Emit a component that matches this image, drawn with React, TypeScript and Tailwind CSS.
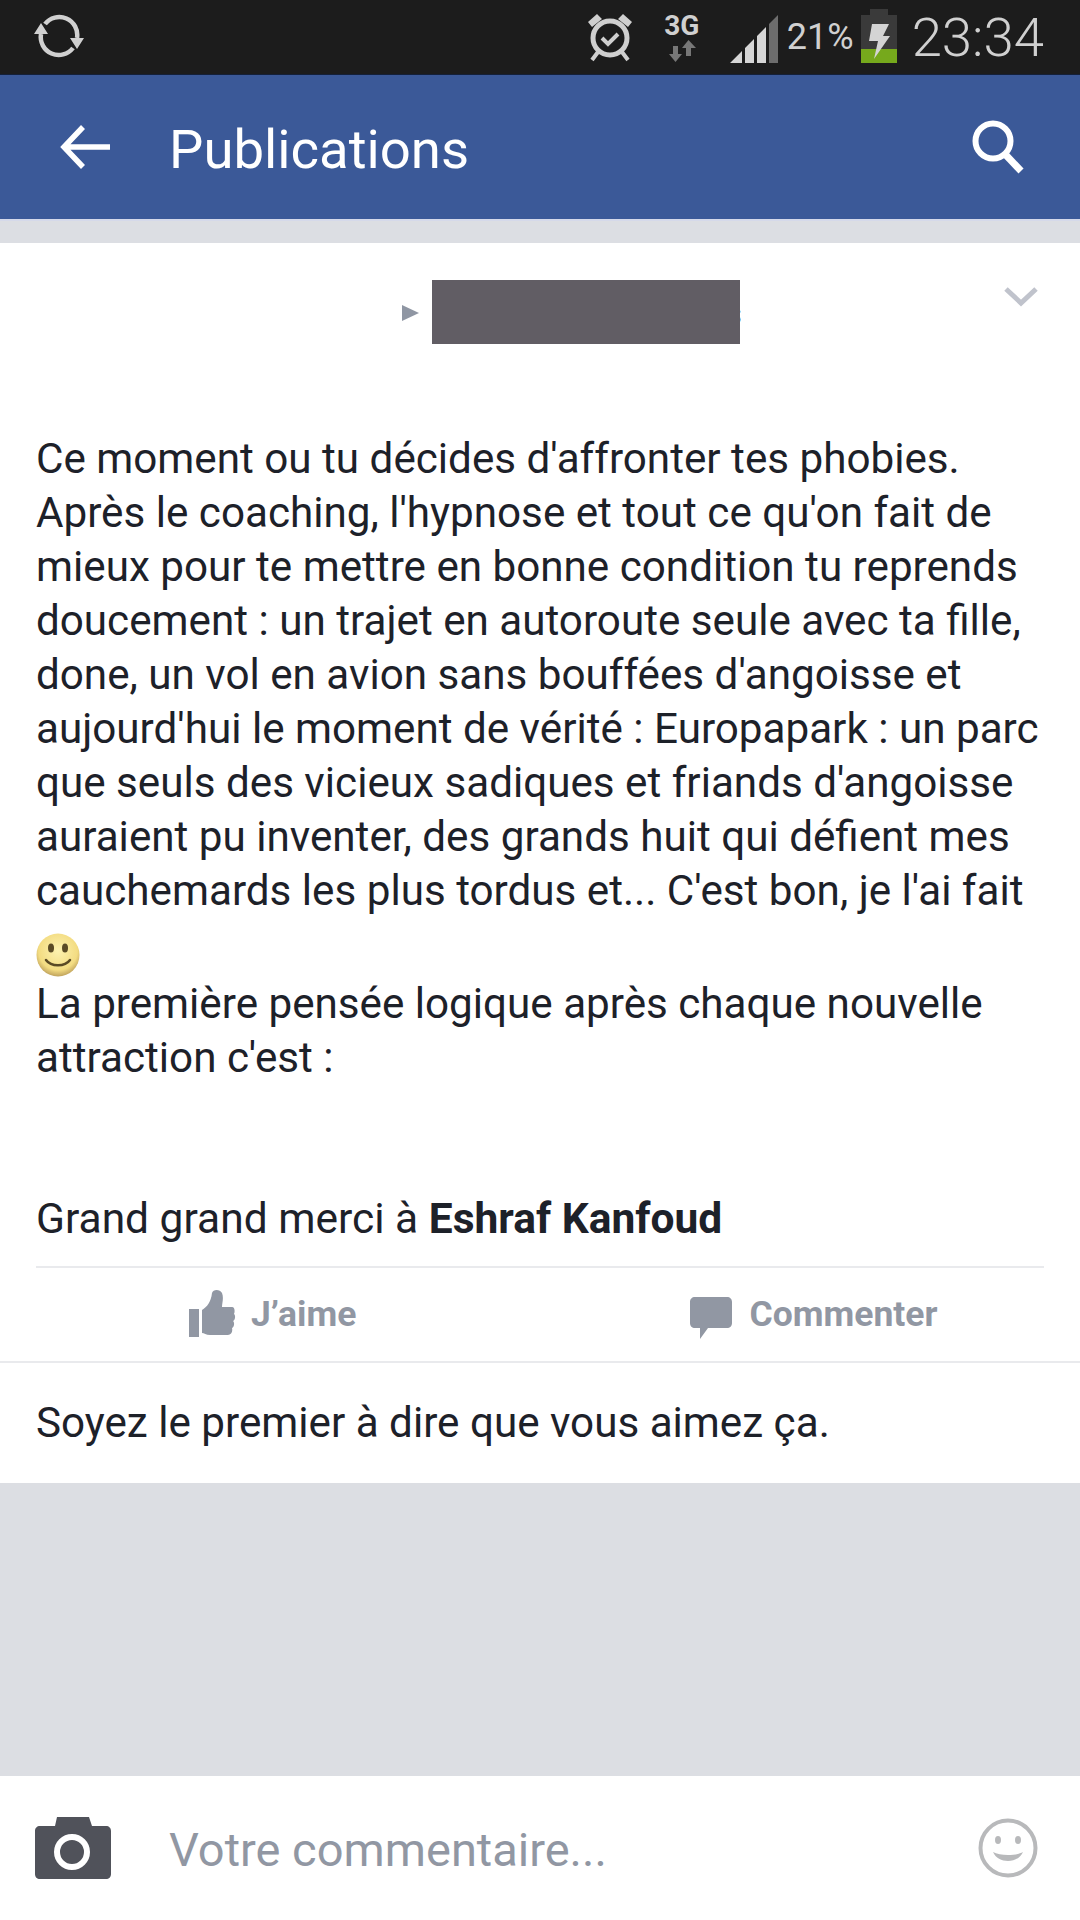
const lines = [
  "Ce moment ou tu décides d'affronter tes phobies.",
  "Après le coaching, l'hypnose et tout ce qu'on fait de",
  "mieux pour te mettre en bonne condition tu reprends",
  "doucement : un trajet en autoroute seule avec ta fille,",
  "done, un vol en avion sans bouffées d'angoisse et",
  "aujourd'hui le moment de vérité : Europapark : un parc",
  "que seuls des vicieux sadiques et friands d'angoisse",
  "auraient pu inventer, des grands huit qui défient mes",
  "cauchemards les plus tordus et... C'est bon, je l'ai fait",
];

function SyncIcon() {
  return (
    <svg width="50" height="46" viewBox="0 0 50 46" fill="none">
      <path d="M11 10A18 18 0 0 1 43 24" stroke="#d0d0d0" strokeWidth="4.5" />
      <path d="M39 34A18 18 0 0 1 7 20" stroke="#d0d0d0" strokeWidth="4.5" />
      <path d="M0 20H14L7 9Z M36 24H50L43 35Z" fill="#d0d0d0" />
    </svg>
  );
}

function AlarmIcon() {
  return (
    <svg width="48" height="50" viewBox="0 0 48 50" fill="none">
      <circle cx="24" cy="26" r="17" stroke="#cfcfcf" strokeWidth="5" />
      <path d="M16 26l6 6 10-10" stroke="#cfcfcf" strokeWidth="4" />
      <path d="M2 10L11 2L16 7L6 15Z M46 10L37 2L32 7L42 15Z" fill="#cfcfcf" />
      <path d="M12 40L6 48M36 40L42 48" stroke="#cfcfcf" strokeWidth="4" />
    </svg>
  );
}

function DataArrows() {
  return (
    <svg width="28" height="22" viewBox="0 0 28 22" fill="#777">
      <path d="M5 6H10V14H14L7.5 22L1 14H5Z" />
      <path d="M18 16H23V8H28L20.5 0L14 8H18Z" />
    </svg>
  );
}

function SignalIcon() {
  return (
    <svg width="48" height="48" viewBox="0 0 48 48">
      <path d="M0 48L12 36V48Z M15 33L24 24V48H15Z M27 21L36 12V48H27Z" fill="#d6d6d6" />
      <path d="M39 9L48 0V48H39Z" fill="#6d6d6d" />
    </svg>
  );
}

function BatteryIcon() {
  return (
    <svg width="36" height="54" viewBox="0 0 36 54">
      <path d="M9 0H27V6H36V54H0V6H9Z" fill="#3a3a3a" />
      <path d="M0 40H36V54H0Z" fill="#76a91c" />
      <path d="M11 15H28L22 27H29L13 50L17 32H8Z" fill="#d4d4d4" />
    </svg>
  );
}

function ThumbIcon() {
  return (
    <svg className="mb-[3px]" width="47" height="47" viewBox="0 0 47 47" fill="#9197a3">
      <path d="M0 19H10V47H0Z" />
      <path d="M13 20C18 17 22 12 23 3C24 -1 31 -1 33 3C35 8 33 13 33 17H43C46 17 46 22 45 24C47 26 46 30 44 31C46 33 45 37 43 38C44 42 42 45 39 45H21C17 45 15 43 13 43Z" />
    </svg>
  );
}

function CommentIcon() {
  return (
    <svg className="mt-[6px]" width="42" height="42" viewBox="0 0 42 42" fill="#9197a3">
      <path d="M5 0H37C40 0 42 2 42 5V26C42 29 40 31 37 31H18L10 42V31H5C2 31 0 29 0 26V5C0 2 2 0 5 0Z" />
    </svg>
  );
}

function CameraIcon() {
  return (
    <svg width="76" height="62" viewBox="0 0 76 62">
      <path d="M20 9L22 0H54L57 9H71C74 9 76 11 76 14V57C76 60 74 62 71 62H5C2 62 0 60 0 57V14C0 11 2 9 5 9Z" fill="#50525a" />
      <circle cx="37" cy="35" r="15" fill="none" stroke="#fff" strokeWidth="6" />
    </svg>
  );
}

function SmileyOutline() {
  return (
    <svg width="60" height="60" viewBox="0 0 60 60" fill="none">
      <circle cx="30" cy="30" r="27.5" stroke="#b8b9bb" strokeWidth="4" />
      <ellipse cx="20" cy="22" rx="3" ry="4" fill="#b8b9bb" />
      <ellipse cx="40" cy="22" rx="3" ry="4" fill="#b8b9bb" />
      <path d="M15 34C20 46 40 46 45 34C38 38 22 38 15 34Z" fill="#b8b9bb" />
    </svg>
  );
}

function SmileyEmoji() {
  return (
    <svg width="44" height="44" viewBox="0 0 44 44">
      <defs>
        <radialGradient id="face" cx="50%" cy="40%" r="60%">
          <stop offset="0%" stopColor="#fdf2b0" />
          <stop offset="75%" stopColor="#f3dc82" />
          <stop offset="100%" stopColor="#bfa25c" />
        </radialGradient>
      </defs>
      <circle cx="22" cy="22" r="21.5" fill="url(#face)" />
      <ellipse cx="15" cy="15" rx="3" ry="4.5" fill="#5a4a25" />
      <ellipse cx="29" cy="15" rx="3" ry="4.5" fill="#5a4a25" />
      <path d="M10 27C15 34 29 34 34 27" fill="none" stroke="#5a4a25" strokeWidth="2.5" strokeLinecap="round" />
    </svg>
  );
}

export default function App() {
  return (
    <div className="w-[1080px] h-[1920px] flex flex-col bg-[#dcdee3] font-['Roboto',sans-serif] overflow-hidden">
      <div className="h-[75px] bg-[#1c1c1c] border-b border-[#14203a] flex items-center pl-[34px] pr-[36px] text-[#d0d0d0]">
        <SyncIcon />
        <div className="ml-auto flex items-center">
          <AlarmIcon />
          <div className="ml-[30px] w-[36px] flex flex-col items-center leading-none">
            <span className="text-[28px] font-bold leading-[28px]">3G</span>
            <DataArrows />
          </div>
          <div className="ml-[30px] mt-[3px]"><SignalIcon /></div>
          <span className="ml-[9px] text-[36px] leading-none">21%</span>
          <div className="ml-[7px] mb-[2px]"><BatteryIcon /></div>
          <span className="ml-[15px] text-[54.5px] font-light leading-none">23:34</span>
        </div>
      </div>

      <div className="h-[144px] bg-[#3b5998] flex items-center pl-[60px] pr-[56px] text-white">
        <svg width="50" height="44" viewBox="0 0 50 44" fill="none" stroke="#fff" strokeWidth="5.5">
          <path d="M50 22H5M23 2L4 22L23 42" />
        </svg>
        <span className="ml-[59px] mt-[4px] text-[54.5px] leading-none">Publications</span>
        <svg className="ml-auto" width="52" height="54" viewBox="0 0 52 54" fill="none" stroke="#fff">
          <circle cx="21" cy="21" r="17.5" strokeWidth="6" />
          <path d="M32 33L49 51" strokeWidth="7" />
        </svg>
      </div>
      <div className="h-[2px] bg-[#d5d9ea]" />

      <div className="mt-[22px] bg-white">
        <div className="relative h-[189px] px-[36px]">
          <span className="absolute left-[724px] top-[53px] text-[34px] leading-none font-bold text-[#111]">s</span>
          <div className="absolute left-[432px] top-[37px] w-[308px] h-[64px] bg-[#615d64]" />
          <div className="absolute left-[402px] top-[62px] w-0 h-0 border-y-[8px] border-y-transparent border-l-[17px] border-l-[#8f96a3]" />
          <svg className="absolute left-[1004px] top-[44px]" width="34" height="20" viewBox="0 0 34 20" fill="none" stroke="#c0c3cc" strokeWidth="5">
            <path d="M2 2L17 16L32 2" />
          </svg>
        </div>

        <div className="px-[36px] text-[42.2px] leading-[54px] text-[#1d2129] whitespace-nowrap">
          {lines.map((line) => (
            <div key={line}>{line}</div>
          ))}
          <div className="h-[44px] mt-[15px]"><SmileyEmoji /></div>
          <div>La première pensée logique après chaque nouvelle</div>
          <div>attraction c'est :</div>
          <div className="mt-[107px] text-[42.5px]">
            Grand grand merci à <span className="font-bold">Eshraf Kanfoud</span>
          </div>
        </div>

        <div className="mx-[36px] mt-[20px] h-[95px] border-t-2 border-[#e9eaed] flex items-center text-[35.5px] font-bold text-[#9197a3]">
          <div className="ml-[153px] flex items-center gap-[15px]">
            <ThumbIcon />
            <span>J’aime</span>
          </div>
          <div className="ml-[334px] flex items-center gap-[17px]">
            <CommentIcon />
            <span>Commenter</span>
          </div>
        </div>

        <div className="h-[122px] border-t-2 border-[#e9eaed] px-[36px] flex items-center text-[42.2px] text-[#1d2129]">
          Soyez le premier à dire que vous aimez ça.
        </div>
      </div>

      <div className="flex-1" />

      <div className="h-[144px] bg-white flex items-center pl-[35px] pr-[42px]">
        <CameraIcon />
        <span className="ml-[58px] mt-[4px] text-[47px] text-[#9197a3]">Votre commentaire...</span>
        <div className="ml-auto"><SmileyOutline /></div>
      </div>
    </div>
  );
}
